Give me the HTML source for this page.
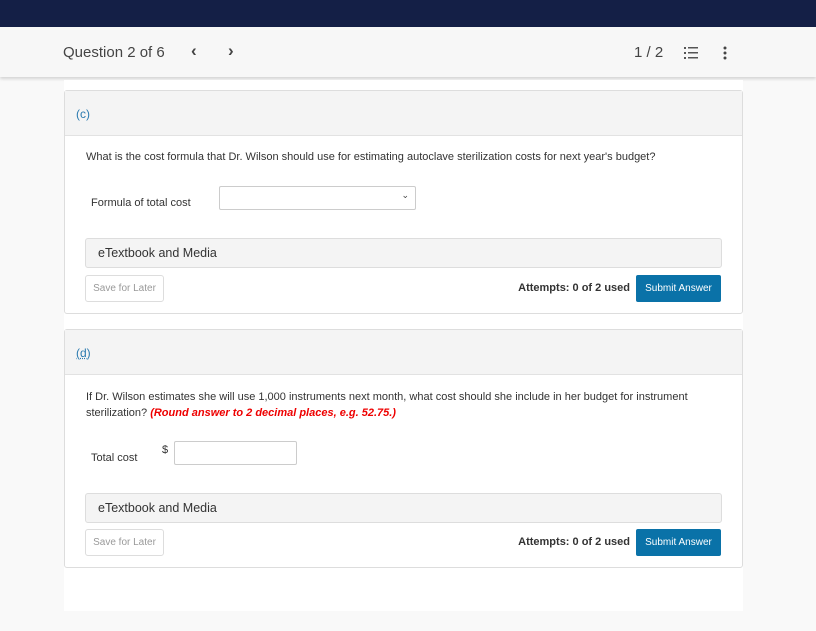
<!DOCTYPE html>
<html><head><meta charset="utf-8"><style>
*{box-sizing:border-box;margin:0;padding:0}
body{width:816px;height:631px;background:#f9f9f9;font-family:"Liberation Sans",sans-serif;color:#333;position:relative;overflow:hidden}
.abs{position:absolute}
.nav{left:0;top:0;width:816px;height:27px;background:#141f46}
.hdr{left:0;top:27px;width:816px;height:50px;background:#f7f7f7;box-shadow:0 2px 3px rgba(0,0,0,.15)}
.col{left:64px;top:80px;width:679px;height:531px;background:#fff}
.card{left:64px;width:679px;border:1px solid #ddd;border-radius:3px;background:#fff}
.ch{position:absolute;left:0;top:0;right:0;height:45px;background:#f4f4f4;border-bottom:1px solid #e2e2e2}
.t{position:absolute;font-size:11px;color:#333;white-space:nowrap}
.et{position:absolute;left:20px;width:637px;height:30px;background:#f4f4f4;border:1px solid #ddd;border-radius:3px;font-size:12.5px;padding:7px 12px;color:#333}
.sv{position:absolute;left:20px;width:79px;height:27px;border:1px solid #ddd;border-radius:3px;font-size:10px;color:#999;text-align:center;line-height:25px}
.att{position:absolute;right:112px;font-size:11px;font-weight:bold;color:#333}
.sub{position:absolute;right:21px;width:85px;height:27px;background:#0a72a8;border-radius:2px;color:#fff;font-size:10px;text-align:center;line-height:27px}
</style></head><body>
<div class="abs nav"></div>
<div class="abs hdr">
 <div class="t" style="left:63px;top:17px;font-size:15px;color:#444">Question 2 of 6</div>
 <div class="t" style="left:191px;top:14px;font-size:17px;font-weight:bold;color:#444">&#8249;</div>
 <div class="t" style="left:228px;top:14px;font-size:17px;font-weight:bold;color:#444">&#8250;</div>
 <div class="t" style="left:634px;top:17px;font-size:15px;color:#444">1 / 2</div>
 <svg class="abs" style="left:684px;top:20px" width="14" height="12"><g fill="#555"><rect x="0" y="0" width="2" height="2"/><rect x="0" y="5" width="2" height="2"/><rect x="0" y="10" width="2" height="2"/><rect x="4" y="0" width="10" height="1.5"/><rect x="4" y="5" width="10" height="1.5"/><rect x="4" y="10" width="10" height="1.5"/></g></svg>
 <svg class="abs" style="left:723px;top:19px" width="4" height="14"><g fill="#444"><circle cx="2" cy="2" r="1.5"/><circle cx="2" cy="7" r="1.5"/><circle cx="2" cy="12" r="1.5"/></g></svg>
</div>
<div class="abs col"></div>
<div class="abs card" style="top:90px;height:224px">
 <div class="ch"><div class="t" style="left:11px;top:16px;font-size:12px;color:#2a7ab0">(c)</div></div>
 <div class="t" style="left:21px;top:60px">What is the cost formula that Dr. Wilson should use for estimating autoclave sterilization costs for next year's budget?</div>
 <div class="t" style="left:26px;top:106px">Formula of total cost</div>
 <div style="position:absolute;left:154px;top:95px;width:197px;height:24px;border:1px solid #ccc;border-radius:2px"><span style="position:absolute;right:6px;top:3px;font-size:9px;color:#444">&#8964;</span></div>
 <div class="et" style="top:147px">eTextbook and Media</div>
 <div class="sv" style="top:184px">Save for Later</div>
 <div class="att" style="top:191px">Attempts: 0 of 2 used</div>
 <div class="sub" style="top:184px">Submit Answer</div>
</div>
<div class="abs card" style="top:329px;height:239px">
 <div class="ch"><div class="t" style="left:11px;top:16px;font-size:12px;color:#2a7ab0;text-decoration:underline dotted">(d)</div></div>
 <div class="t" style="left:21px;top:59px;line-height:16px;white-space:normal;width:620px">If Dr. Wilson estimates she will use 1,000 instruments next month, what cost should she include in her budget for instrument sterilization? <b style="color:#e00;font-style:italic">(Round answer to 2 decimal places, e.g. 52.75.)</b></div>
 <div class="t" style="left:26px;top:122px">Total cost</div>
 <div class="t" style="left:97px;top:114px">$</div>
 <div style="position:absolute;left:109px;top:111px;width:123px;height:24px;border:1px solid #ccc;border-radius:2px"></div>
 <div class="et" style="top:163px">eTextbook and Media</div>
 <div class="sv" style="top:199px">Save for Later</div>
 <div class="att" style="top:206px">Attempts: 0 of 2 used</div>
 <div class="sub" style="top:199px">Submit Answer</div>
</div>
</body></html>
